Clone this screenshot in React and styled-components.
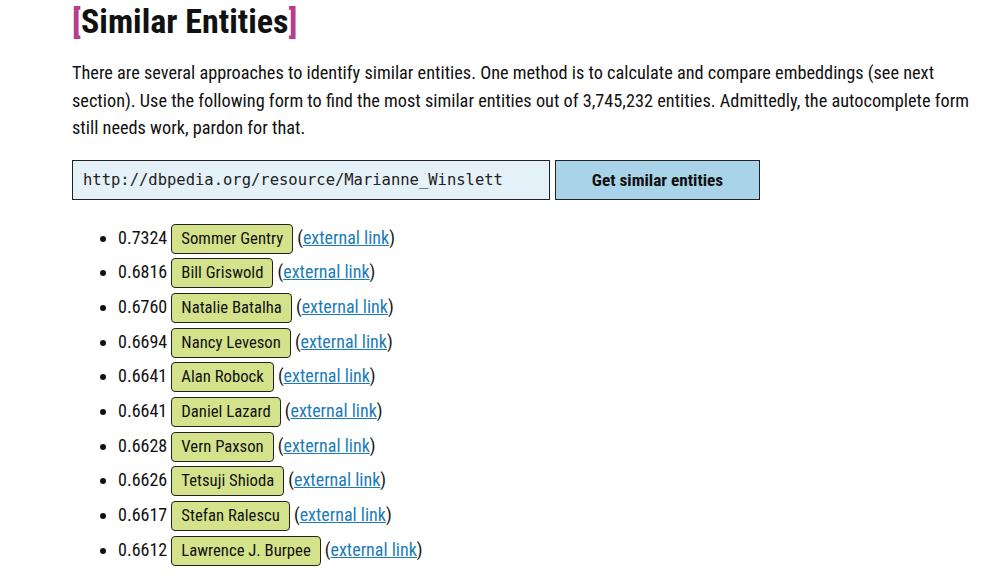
import React from "react";
import styled, { createGlobalStyle } from "styled-components";

const GlobalStyle = createGlobalStyle`
  body {
    margin: 0;
    background: #ffffff;
    font-family: "Roboto Condensed", Roboto, sans-serif;
    font-stretch: condensed;
    color: #111;
  }
`;

const entities = [
  ["0.7324", "Sommer Gentry"],
  ["0.6816", "Bill Griswold"],
  ["0.6760", "Natalie Batalha"],
  ["0.6694", "Nancy Leveson"],
  ["0.6641", "Alan Robock"],
  ["0.6641", "Daniel Lazard"],
  ["0.6628", "Vern Paxson"],
  ["0.6626", "Tetsuji Shioda"],
  ["0.6617", "Stefan Ralescu"],
  ["0.6612", "Lawrence J. Burpee"],
];

function App() {
  return (
    <Page>
      <GlobalStyle />
      <Title>
        <Bracket>[</Bracket>Similar Entities<Bracket>]</Bracket>
      </Title>
      <Intro>
        There are several approaches to identify similar entities. One method is to calculate and compare embeddings (see next
        section). Use the following form to find the most similar entities out of 3,745,232 entities. Admittedly, the autocomplete form
        still needs work, pardon for that.
      </Intro>
      <Form>
        <Input defaultValue="http://dbpedia.org/resource/Marianne_Winslett" />
        <Button>Get similar entities</Button>
      </Form>
      <List>
        {entities.map(([score, name]) => (
          <Item key={name}>
            {score} <Badge>{name}</Badge> (<Link href="#">external link</Link>)
          </Item>
        ))}
      </List>
    </Page>
  );
}

export default App;

const Page = styled.div`
  padding: 0 0 0 72px;
  width: 905px;
`;

const Title = styled.h1`
  margin: 0;
  padding-top: 1px;
  font-size: 34px;
  font-weight: 700;
  line-height: 40px;
  color: #111;
`;

const Bracket = styled.span`
  color: #b63d8c;
`;

const Intro = styled.p`
  margin: 18px 0 0;
  font-size: 18.3px;
  line-height: 27.5px;
`;

const Form = styled.div`
  display: flex;
  gap: 5px;
  margin-top: 18px;
`;

const Input = styled.input`
  box-sizing: border-box;
  width: 478px;
  height: 40px;
  padding: 0 10px;
  border: 1px solid #222;
  background: #e5f1f8;
  font-family: "DejaVu Sans Mono", "Liberation Mono", monospace;
  font-size: 15.5px;
  line-height: 20px;
  color: #222;
  outline: none;
`;

const Button = styled.button`
  box-sizing: border-box;
  width: 205px;
  height: 40px;
  border: 1px solid #222;
  background: #a8d3e8;
  font-family: inherit;
  font-stretch: condensed;
  font-weight: 700;
  font-size: 17.3px;
  color: #111;
`;

const List = styled.ul`
  margin: 21px 0 0;
  padding-left: 46px;
`;

const Item = styled.li`
  font-size: 18px;
  line-height: 34.7px;
`;

const Badge = styled.span`
  display: inline-block;
  padding: 0 9px;
  height: 28px;
  line-height: 28px;
  border: 1px solid #222;
  border-radius: 4px;
  background: #d4e38b;
  font-size: 16.7px;
`;

const Link = styled.a`
  color: #1b7bb8;
  text-decoration: underline;
`;
